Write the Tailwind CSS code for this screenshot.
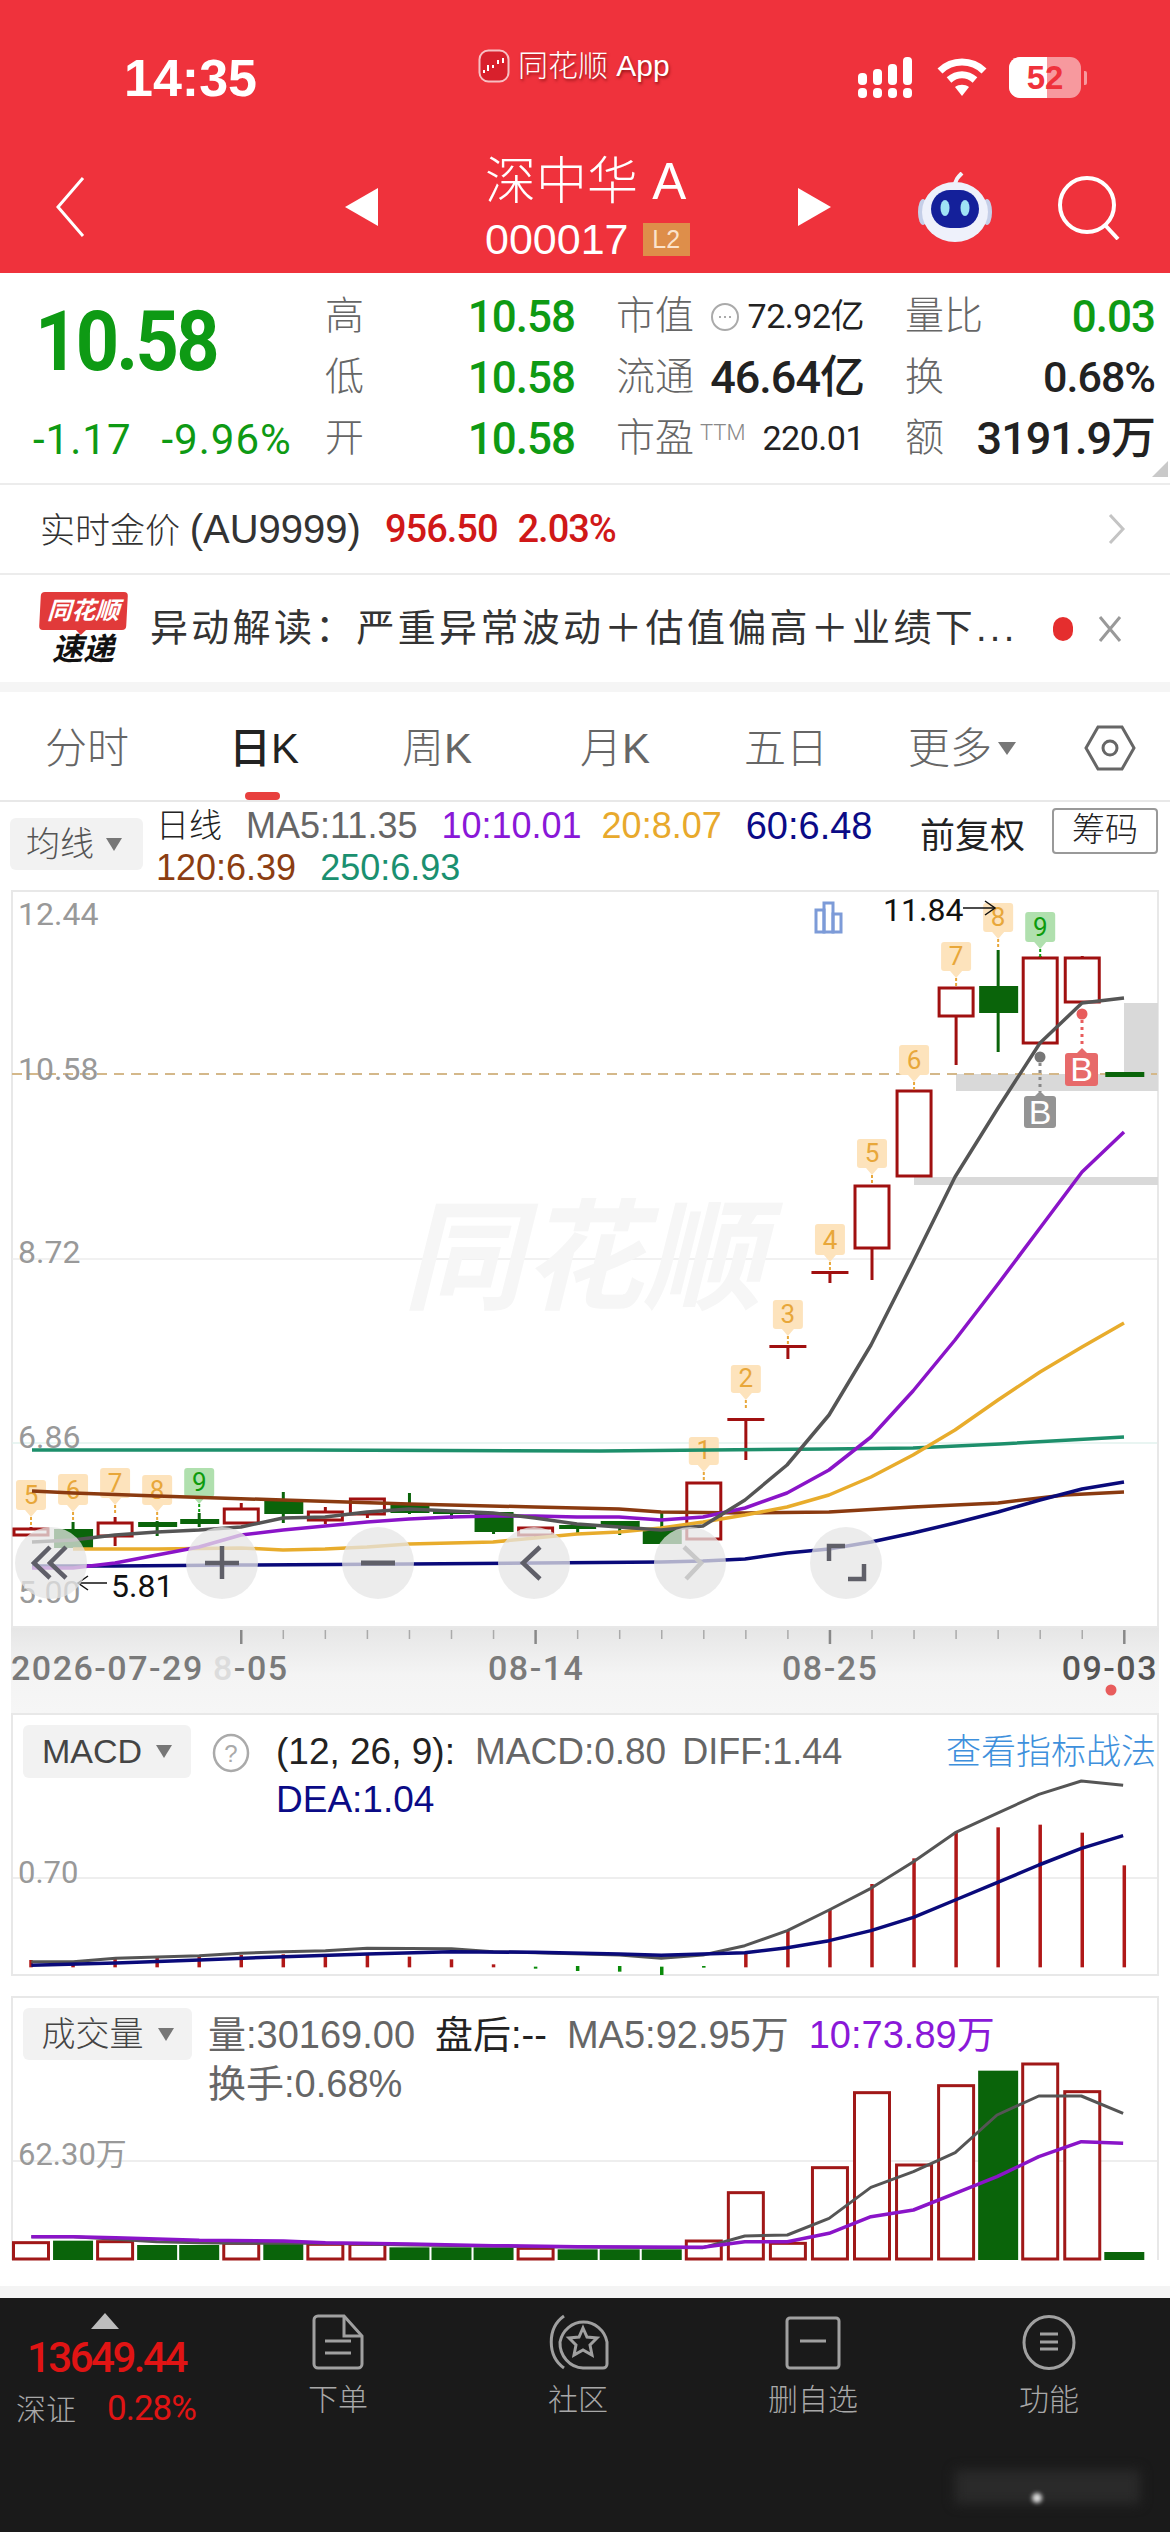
<!DOCTYPE html>
<html lang="zh-CN">
<head>
    <meta charset="UTF-8">
    <meta name="viewport" content="width=device-width, initial-scale=1.0">
    <title>深中华A</title>
    <script src="https://cdn.jsdelivr.net/npm/@tailwindcss/browser@4"></script>
</head>
<body class="bg-white">
<div class="w-[1170px] h-[2532px] overflow-hidden flex flex-col bg-white text-[#333] font-['Liberation_Sans','Noto_Sans_CJK_SC',sans-serif]">

    <!-- header -->
    <header class="h-[273px] flex-none bg-[#ef323c] text-white flex flex-col">
        <div class="h-[140px] flex-none flex pt-[48px]">
            <div class="w-[478px] pl-[124px] text-[52px] leading-[60px] font-bold">14:35</div>
            <div class="w-[379px] flex items-start gap-[8px] pt-[1px]">
                <svg width="32" height="34" viewBox="0 0 32 34"><rect x="1.5" y="1.5" width="29" height="31" rx="9" fill="#d8202c" stroke="#fff" stroke-opacity=".7" stroke-width="2"/><path d="M6 24v-3M10 22v-6M15 19v-3M20 15v-4M25 14V9" stroke="#fff" stroke-width="2"/></svg>
                <span class="text-[30px] leading-[34px] font-light [text-shadow:1px_2px_3px_rgba(90,0,0,.6)]">同花顺 App</span>
            </div>
            <div class="flex items-start gap-[22px] pt-[9px]">
                <svg width="58" height="42" viewBox="0 0 58 42" fill="#fff">
                    <rect x="1" y="16" width="9" height="12" rx="4"/><rect x="1" y="31" width="9" height="10" rx="4"/>
                    <rect x="16" y="12" width="9" height="16" rx="4"/><rect x="16" y="31" width="9" height="10" rx="4"/>
                    <rect x="31" y="7" width="9" height="21" rx="4"/><rect x="31" y="31" width="9" height="10" rx="4"/>
                    <rect x="46" y="0" width="9" height="28" rx="4"/><rect x="46" y="31" width="9" height="10" rx="4"/>
                </svg>
                <svg width="50" height="40" viewBox="0 0 50 40" fill="none" stroke="#fff" stroke-width="7">
                    <path d="M3 14C15 2 35 2 47 14"/><path d="M12 23c8-7 18-7 26 0"/><path d="M25 39l-7-9c4-3 10-3 14 0z" fill="#fff" stroke="none"/>
                </svg>
                <div class="flex items-center">
                    <div class="relative w-[72px] h-[41px] rounded-[11px] bg-white/50 overflow-hidden">
                        <div class="absolute left-0 top-0 bottom-0 w-[38px] bg-white"></div>
                        <div class="absolute inset-0 text-center text-[#ef323c] text-[33px] leading-[41px] font-bold">52</div>
                    </div>
                    <div class="ml-[3px] w-[3px] h-[14px] rounded-r-[2px] bg-white/50"></div>
                </div>
            </div>
        </div>
        <div class="flex-1 flex items-center">
            <svg class="ml-[55px]" width="30" height="60" viewBox="0 0 30 60" fill="none" stroke="#fff" stroke-width="3"><path d="M28 1L3 30l25 29"/></svg>
            <svg class="ml-[260px]" width="33" height="38" viewBox="0 0 33 38" fill="#fff"><path d="M33 0v38L0 19z"/></svg>
            <div class="ml-[107px] w-[205px] flex flex-col">
                <div class="text-[51px] leading-[62px] font-light whitespace-nowrap">深中华 A</div>
                <div class="flex items-center mt-[3px]">
                    <span class="text-[43px] leading-[46px] font-light">000017</span>
                    <span class="ml-[14px] w-[48px] h-[33px] bg-[#de8e4a] text-[#fbe3cc] text-[25px] leading-[33px] text-center">L2</span>
                </div>
            </div>
            <svg class="ml-[108px]" width="33" height="38" viewBox="0 0 33 38" fill="#fff"><path d="M0 0v38l33-19z"/></svg>
            <svg class="ml-[87px]" width="74" height="70" viewBox="0 0 74 70">
                <path d="M37 14C37 8 40 5 44 1" stroke="#f2f4fb" stroke-width="4" fill="none"/>
                <ellipse cx="5" cy="40" rx="5" ry="13" fill="#c5cfe8"/><ellipse cx="69" cy="40" rx="5" ry="13" fill="#c5cfe8"/>
                <ellipse cx="37" cy="40" rx="33" ry="30" fill="#eef1fb"/>
                <rect x="13" y="18" width="48" height="38" rx="19" fill="#14209a"/>
                <ellipse cx="27" cy="36" rx="4.5" ry="8" fill="#9fe3f5"/><ellipse cx="47" cy="36" rx="4.5" ry="8" fill="#9fe3f5"/>
            </svg>
            <svg class="ml-[66px] mt-[2px]" width="62" height="64" viewBox="0 0 62 64" fill="none" stroke="#fff" stroke-width="4"><circle cx="29" cy="29" r="27"/><path d="M47 49l13 14"/></svg>
        </div>
    </header>

    <!-- quote -->
    <section class="relative h-[212px] flex-none border-b-2 border-[#ececec] flex">
        <div class="w-[325px] flex-none flex flex-col text-[#0e9a14]">
            <div class="ml-[35px] pt-[20px] origin-left scale-x-[.9] text-[84px] leading-[98px] font-bold font-['Roboto',sans-serif] tracking-[-3px]">10.58</div>
            <div class="pl-[33px] mt-[26px] flex gap-[30px] text-[42px] leading-[46px] tracking-[1px] font-['Roboto',sans-serif]"><span>-1.17</span><span>-9.96%</span></div>
        </div>
        <div class="pt-[13px] grid grid-cols-[250px_248px_250px] gap-x-[41px] auto-rows-[61px] text-[39px] font-light">
            <div class="flex justify-between items-center"><span class="text-[#666]">高</span><span class="text-[#0e9a14] text-[44px] font-medium font-['Roboto',sans-serif] tracking-[-1px]">10.58</span></div>
            <div class="flex justify-between items-center"><span class="text-[#666]">市值</span><span class="flex items-center"><svg class="mr-[8px]" width="30" height="30" viewBox="0 0 30 30" fill="none" stroke="#aaa" stroke-width="2"><circle cx="15" cy="15" r="13"/><path d="M9 15h2M14 15h2M19 15h2"/></svg><span class="text-[#222] text-[34px] font-['Roboto','Noto_Sans_CJK_SC',sans-serif] font-normal tracking-[-.5px]">72.92亿</span></span></div>
            <div class="flex justify-between items-center"><span class="text-[#666]">量比</span><span class="text-[#0e9a14] text-[44px] font-medium font-['Roboto',sans-serif] tracking-[-1px]">0.03</span></div>

            <div class="flex justify-between items-center"><span class="text-[#666]">低</span><span class="text-[#0e9a14] text-[44px] font-medium font-['Roboto',sans-serif] tracking-[-1px]">10.58</span></div>
            <div class="flex justify-between items-center"><span class="text-[#666]">流通</span><span class="text-[#222] text-[45px] font-medium font-['Roboto','Noto_Sans_CJK_SC',sans-serif] tracking-[-1px]">46.64亿</span></div>
            <div class="flex justify-between items-center"><span class="text-[#666]">换</span><span class="text-[#222] text-[43px] font-medium font-['Roboto',sans-serif] tracking-[-1px]">0.68%</span></div>

            <div class="flex justify-between items-center"><span class="text-[#666]">开</span><span class="text-[#0e9a14] text-[44px] font-medium font-['Roboto',sans-serif] tracking-[-1px]">10.58</span></div>
            <div class="flex justify-between items-center"><span class="text-[#666]">市盈<sup class="text-[22px] ml-[6px] text-[#888] font-['Roboto',sans-serif]">TTM</sup></span><span class="text-[#222] text-[34px] font-normal font-['Roboto',sans-serif] tracking-[-.5px]">220.01</span></div>
            <div class="flex justify-between items-center"><span class="text-[#666]">额</span><span class="text-[#222] text-[45px] font-medium font-['Roboto','Noto_Sans_CJK_SC',sans-serif] tracking-[-1px]">3191.9万</span></div>
        </div>
        <div class="absolute right-[2px] bottom-[6px] w-0 h-0 border-l-[16px] border-l-transparent border-b-[16px] border-b-[#c9c9c9]"></div>
    </section>

    <!-- gold price row -->
    <section class="h-[90px] flex-none border-b-2 border-[#ececec] flex items-center pl-[40px] text-[35px] whitespace-nowrap">
        <span class="font-light">实时金价 <span class="text-[40px]">(AU9999)</span></span>
        <span class="ml-[24px] text-[#d01818] font-medium text-[38px] font-['Roboto',sans-serif] tracking-[-1px]">956.50</span>
        <span class="ml-[20px] text-[#d01818] font-medium text-[38px] font-['Roboto',sans-serif] tracking-[-1px]">2.03%</span>
        <svg class="ml-auto mr-[44px]" width="18" height="32" viewBox="0 0 18 32" fill="none" stroke="#c4c4c4" stroke-width="3"><path d="M2 2l13 14L2 30"/></svg>
    </section>

    <!-- news row -->
    <section class="h-[107px] flex-none flex items-center pl-[38px] whitespace-nowrap">
        <div class="w-[90px] flex-none flex flex-col items-center">
            <div class="relative w-[87px] h-[38px] bg-[#e13a3a] rounded-[4px] -skew-x-3 text-white text-[24px] leading-[38px] font-bold italic text-center">同花顺
                <div class="absolute left-[36px] top-[37px] w-0 h-0 border-x-[6px] border-x-transparent border-t-[6px] border-t-[#e13a3a]"></div>
            </div>
            <div class="mt-[4px] text-[#111] text-[31px] leading-[32px] font-bold italic">速递</div>
        </div>
        <div class="ml-[22px] text-[38px] tracking-[3.3px] w-[870px] font-normal">异动解读：严重异常波动＋估值偏高＋业绩下...</div>
        <div class="ml-[33px] w-[20px] h-[24px] rounded-full bg-[#e52e2e] flex-none"></div>
        <svg class="ml-[25px]" width="24" height="28" viewBox="0 0 24 28" stroke="#999" stroke-width="3"><path d="M2 2l20 24M22 2L2 26"/></svg>
    </section>
    <div class="h-[10px] flex-none bg-[#f5f5f5]"></div>

    <!-- period tabs -->
    <nav class="relative h-[110px] flex-none border-b-2 border-[#e8e8e8] flex items-center text-[42px] text-[#666] font-light pt-[4px]">
        <div class="w-[174px] text-center">分时</div>
        <div class="w-[180px] text-center text-[#222] font-medium">日K</div>
        <div class="w-[166px] text-center">周K</div>
        <div class="w-[190px] text-center">月K</div>
        <div class="w-[152px] text-center">五日</div>
        <div class="w-[200px] text-center flex items-center justify-center">更多<span class="ml-[6px] w-0 h-0 border-x-[9px] border-x-transparent border-t-[13px] border-t-[#777]"></span></div>
        <svg class="ml-[22px]" width="52" height="46" viewBox="0 0 52 46" fill="none" stroke="#666" stroke-width="3"><path d="M14 2h24l12 21-12 21H14L2 23z"/><circle cx="26" cy="23" r="7"/></svg>
        <div class="absolute left-[245px] top-[100px] w-[35px] h-[8px] rounded-[4px] bg-[#e8403e]"></div>
    </nav>

    <!-- moving average legend -->
    <section class="h-[88px] flex-none relative">
        <div class="absolute left-[10px] top-[16px] w-[133px] h-[52px] rounded-[6px] bg-[#f2f2f2] flex items-center pl-[16px] text-[34px] text-[#555] font-light">均线<span class="ml-[12px] w-0 h-0 border-x-[8px] border-x-transparent border-t-[13px] border-t-[#777]"></span></div>
        <div class="pl-[156px] pt-[3px] text-[36px] leading-[42px] whitespace-nowrap">
            <div class="flex gap-[24px]">
                <span class="text-[#222] font-light text-[33px]">日线</span>
                <span class="text-[#666]">MA5:11.35</span>
                <span class="text-[#8a18d8] -mr-[4px]">10:10.01</span>
                <span class="text-[#e8a92c]">20:8.07</span>
                <span class="text-[#0b0b86] text-[38px]">60:6.48</span>
            </div>
            <div class="flex gap-[24px]">
                <span class="text-[#8b3d12]">120:6.39</span>
                <span class="text-[#1a9070]">250:6.93</span>
            </div>
        </div>
        <div class="absolute left-[920px] top-[10px] leading-[48px] text-[35px] font-normal text-[#222]">前复权</div>
        <div class="absolute left-[1052px] top-[6px] w-[106px] h-[46px] border-2 border-[#999] rounded-[4px] text-center text-[33px] leading-[40px] text-[#222] font-light">筹码</div>
    </section>

    <!-- k line chart, one canvas with its date axis -->
    <svg id="kline" class="flex-none block" width="1170" height="823" viewBox="0 890 1170 823"></svg>

    <!-- MACD panel -->
    <section class="relative mx-[11px] h-[263px] flex-none border-2 border-[#e8e8e8]">
        <svg id="macd" class="absolute left-[-13px] top-[-2px]" width="1170" height="263" viewBox="0 1713 1170 263"></svg>
        <div class="relative flex pl-[10px] pt-[10px]">
            <div class="w-[168px] h-[53px] rounded-[6px] bg-[#f2f2f2] flex items-center justify-center text-[34px] text-[#444]">MACD<span class="ml-[14px] w-0 h-0 border-x-[8px] border-x-transparent border-t-[13px] border-t-[#777]"></span></div>
            <svg class="ml-[21px] mt-[8px]" width="38" height="40" viewBox="0 0 38 40" fill="none" stroke="#aaa" stroke-width="2.5"><ellipse cx="19" cy="20" rx="17" ry="18"/><text x="19" y="29" text-anchor="middle" font-size="24" fill="#aaa" stroke="none">?</text></svg>
            <div class="ml-[26px] flex-1 pt-[3px] text-[37px] leading-[48px] whitespace-nowrap">
                <div class="flex">
                    <span class="text-[#222]">(12, 26, 9):</span>
                    <span class="ml-[20px] text-[#666]">MACD:0.80</span>
                    <span class="ml-[16px] text-[#666] text-[36px]">DIFF:1.44</span>
                    <span class="ml-auto mr-[1px] text-[#3e90dc] text-[35px] font-light">查看指标战法</span>
                </div>
                <div class="text-[#0b0b86]">DEA:1.04</div>
            </div>
        </div>
    </section>

    <div class="h-[20px] flex-none"></div>

    <!-- volume panel -->
    <section class="relative mx-[11px] h-[264px] flex-none border-x-2 border-t-2 border-[#e8e8e8]">
        <svg id="vol" class="absolute left-[-13px] top-[-2px]" width="1170" height="266" viewBox="0 1996 1170 266"></svg>
        <div class="relative flex pl-[10px] pt-[10px]">
            <div class="w-[169px] h-[52px] rounded-[6px] bg-[#f2f2f2] flex items-center justify-center text-[34px] text-[#444] font-light">成交量<span class="ml-[14px] w-0 h-0 border-x-[8px] border-x-transparent border-t-[13px] border-t-[#777]"></span></div>
            <div class="ml-[16px] text-[38px] leading-[49px] pt-[3px] whitespace-nowrap">
                <div class="flex gap-[20px]">
                    <span class="text-[#666]">量:30169.00</span>
                    <span class="text-[#222]">盘后:--</span>
                    <span class="text-[#666]">MA5:92.95万</span>
                    <span class="text-[#8a18d8]">10:73.89万</span>
                </div>
                <div class="text-[#666]">换手:0.68%</div>
            </div>
        </div>
    </section>

    <div class="h-[26px] flex-none"></div>
    <div class="h-[12px] flex-none bg-[#f4f4f4]"></div>

    <!-- bottom bar -->
    <footer class="relative flex-1 bg-[#1a1a1a] flex items-start text-[#a8a8a8] text-[30px] font-light">
        <div class="w-[218px] flex-none pt-[15px] flex flex-col">
            <div class="ml-[91px] w-0 h-0 border-x-[14px] border-x-transparent border-b-[16px] border-b-[#bdbdbd]"></div>
            <div class="pl-[27px] mt-[6px] text-[#e01414] text-[42px] leading-[46px] font-medium font-['Roboto',sans-serif] tracking-[-2.5px]">13649.44</div>
            <div class="pl-[16px] mt-[2px] flex items-center gap-[31px]"><span>深证</span><span class="text-[#e01414] text-[35px] font-normal font-['Roboto',sans-serif] tracking-[-1px]">0.28%</span></div>
        </div>
        <div class="w-[240px] flex-none pt-[16px] flex flex-col items-center">
            <svg width="52" height="56" viewBox="0 0 52 56" fill="none" stroke="#a0a0a0" stroke-width="3"><path d="M6 2h26l18 20v28a4 4 0 0 1-4 4H6a4 4 0 0 1-4-4V6a4 4 0 0 1 4-4z"/><path d="M32 2v20h18M13 27h26M13 39h26"/></svg>
            <div class="mt-[12px] leading-[36px]">下单</div>
        </div>
        <div class="w-[240px] flex-none pt-[16px] flex flex-col items-center">
            <svg width="62" height="56" viewBox="0 0 62 56" fill="none" stroke="#a0a0a0" stroke-width="3"><path d="M17 2C0 14 0 42 17 54"/><path d="M13 28a24 25 0 0 1 47 0v22a4 4 0 0 1-4 4H36a24 25 0 0 1-23-26z"/><path d="M36 14l4 9 10 1-7 7 2 10-9-5-9 5 2-10-7-7 10-1z"/></svg>
            <div class="mt-[12px] leading-[36px]">社区</div>
        </div>
        <div class="w-[230px] flex-none pt-[18px] flex flex-col items-center">
            <svg width="56" height="54" viewBox="0 0 56 54" fill="none" stroke="#a0a0a0" stroke-width="3"><rect x="2" y="2" width="52" height="50" rx="3"/><path d="M15 25h26"/></svg>
            <div class="mt-[12px] leading-[36px]">删自选</div>
        </div>
        <div class="w-[242px] flex-none pt-[17px] flex flex-col items-center">
            <svg width="54" height="55" viewBox="0 0 54 55" fill="none" stroke="#a0a0a0" stroke-width="3"><ellipse cx="27" cy="27.5" rx="25" ry="26"/><path d="M18 19h18M18 27h18M18 34h18"/></svg>
            <div class="mt-[12px] leading-[36px]">功能</div>
        </div>
        <div class="absolute left-[955px] top-[172px] w-[185px] h-[34px] bg-[#2a2a2a] blur-[6px]"></div>
        <div class="absolute left-[1032px] top-[195px] w-[10px] h-[10px] rounded-full bg-[#ddd] blur-[2px]"></div>
    </footer>
</div>

<script>
    const RED = "#a01010", GREEN = "#0a640a";
    const GRAY = "#555", PURPLE = "#8a14c8", ORANGE = "#e8ac2c", NAVY = "#0a0a7a", BROWN = "#8a3a10", TEAL = "#1d8f6b";
    const STEP = 42.05, FIRST = 31;
    const xAt = i => FIRST + STEP * i;

    function line(x1, y1, x2, y2, c, w, extra) {
        return `<line x1="${x1}" y1="${y1}" x2="${x2}" y2="${y2}" stroke="${c}" stroke-width="${w}" ${extra || ""}/>`;
    }
    function rect(x, y, w, h, fill, extra) {
        return `<rect x="${x}" y="${y}" width="${w}" height="${h}" fill="${fill}" ${extra || ""}/>`;
    }
    function text(x, y, s, size, fill, extra) {
        return `<text x="${x}" y="${y}" font-size="${size}" fill="${fill}" ${extra || ""}>${s}</text>`;
    }
    function poly(pts, c, w) {
        const p = pts.map(a => a.join(",")).join(" ");
        return `<polyline points="${p}" fill="none" stroke="${c}" stroke-width="${w}" stroke-linejoin="round" stroke-linecap="butt"/>`;
    }
    const ROBOTO = `font-family="Roboto, sans-serif"`;
    const LIB = `font-family="Liberation Sans, sans-serif"`;

    // ----- k line -----
    // [up?, bodyTop, bodyBottom, wickTop, wickBottom]
    const candles = [
        [1,1529,1535,1527,1536],[0,1529,1548,1522,1548],[1,1523,1536,1517,1546],[0,1522,1527,1521,1536],
        [0,1519,1524,1513,1527],[1,1509,1523,1503,1524],[0,1501,1514,1492,1523],[1,1512,1520,1507,1524],
        [1,1499,1514,1498,1518],[0,1504,1513,1493,1514],[0,1510,1514,1510,1519],[0,1512,1532,1512,1534],
        [1,1528,1535,1528,1537],[0,1525,1529,1525,1534],[0,1521,1527,1521,1535],[0,1530,1544,1513,1544],
        [1,1483,1539,1483,1539],[1,1418,1421,1418,1460],[1,1345,1348,1345,1359],[1,1271,1274,1271,1283],
        [1,1186,1248,1186,1280],[1,1091,1176,1091,1176],[1,988,1016,988,1065],[0,986,1013,950,1052],
        [1,958,1043,956,1043],[1,958,1002,956,1002],[0,1072,1077,1072,1077]
    ];
    // tag number, candle index, top, bottom, green
    const tags = [
        ["5",0,1480,1510],["6",1,1474,1505],["7",2,1468,1498],["8",3,1475,1505],["9",4,1468,1497,1],
        ["1",16,1437,1465],["2",17,1365,1393],["3",18,1300,1329],["4",19,1224,1255],["5",20,1139,1168],
        ["6",21,1045,1075],["7",22,942,971],["8",23,903,932],["9",24,912,942,1]
    ];
    const ma5 = [[32,1542],[73,1540],[115,1535],[157,1532],[199,1530],[241,1527],[283,1518],[325,1517],[367,1512],[409,1509],[451,1511],[493,1513],[535,1518],[577,1524],[619,1527],[661,1530],[703,1526],[745,1500],[787,1465],[829,1415],[871,1345],[913,1262],[955,1177],[998,1108],[1040,1043],[1082,1003],[1124,998]];
    const ma10 = [[32,1568],[73,1568],[115,1563],[157,1555],[199,1547],[241,1535],[283,1530],[325,1526],[367,1522],[409,1519],[451,1517],[493,1516],[535,1516],[577,1517],[619,1517],[661,1520],[703,1517],[745,1508],[787,1493],[829,1470],[871,1437],[913,1391],[955,1340],[998,1284],[1040,1228],[1082,1172],[1124,1132]];
    const ma20 = [[73,1549],[115,1549],[157,1549],[241,1548],[283,1550],[325,1549],[367,1547],[409,1544],[451,1543],[493,1542],[535,1538],[577,1534],[619,1532],[661,1528],[703,1522],[745,1515],[787,1507],[829,1495],[871,1477],[913,1455],[955,1430],[998,1400],[1040,1372],[1082,1347],[1124,1323]];
    const ma60 = [[32,1566],[115,1566],[241,1565],[409,1564],[535,1563],[661,1562],[703,1561],[745,1559],[787,1553],[829,1549],[871,1542],[913,1533],[955,1523],[998,1512],[1040,1500],[1082,1489],[1124,1482]];
    const ma120 = [[32,1491],[73,1493],[157,1496],[283,1500],[409,1504],[535,1507],[619,1509],[661,1512],[745,1513],[829,1512],[913,1507],[998,1503],[1065,1495],[1124,1492]];
    const ma250 = [[32,1450],[300,1450],[600,1451],[829,1449],[913,1448],[1000,1444],[1124,1437]];

    let k = "";
    k += rect(12, 891, 1146, 736, "#fff", `stroke="#e8e8e8" stroke-width="2"`);
    k += line(12, 1259, 1157, 1259, "#ececec", 1.5);
    k += line(12, 1443, 1157, 1443, "#e2f2ee", 1.5);
    k += text(403, 1300, "同花顺", 120, "#f6f6f6", `font-family="Noto Sans CJK SC, sans-serif" font-weight="700" font-style="italic"`);
    k += rect(956, 1074, 202, 17, "#d9d9d9");
    k += rect(914, 1177, 244, 8, "#d9d9d9");
    k += rect(1124, 1003, 34, 71, "#d9d9d9");
    k += line(12, 1074, 1157, 1074, "#d4b88a", 2, `stroke-dasharray="10 7"`);
    k += `<g ${ROBOTO}>` + text(18, 925, "12.44", 32, "#999") + text(18, 1080, "10.58", 32, "#999") + text(18, 1263, "8.72", 32, "#999") + text(18, 1448, "6.86", 32, "#999") + text(18, 1603, "5.00", 32, "#999") + `</g>`;

    candles.forEach((c, i) => {
        const x = xAt(i), col = c[0] ? RED : GREEN, h = c[2] - c[1];
        k += line(x, c[3], x, c[4], col, 3);
        if (h <= 4) k += rect(x - 18.5, c[1], 37, h, col);
        else if (c[0]) k += rect(x - 17, c[1], 34, h, "#fff", `stroke="${col}" stroke-width="3"`);
        else k += rect(x - 19, c[1], 39, h, col);
    });

    tags.forEach(t => {
        const x = xAt(t[1]), g = t[4], bg = g ? "#b0e0ae" : "#fde3bc", fg = g ? "#0d9b0d" : "#e8a73a";
        k += rect(x - 15, t[2], 30, t[3] - t[2], bg, `rx="3"`);
        k += `<path d="M${x - 6} ${t[3]}L${x} ${t[3] + 7}L${x + 6} ${t[3]}z" fill="${bg}"/>`;
        k += line(x, t[3] + 7, x, t[3] + 16, fg, 2, `stroke-dasharray="3 2"`);
        k += text(x, t[3] - 6, t[0], 26, fg, `text-anchor="middle" ${ROBOTO}`);
    });

    k += poly(ma250, TEAL, 3.5) + poly(ma120, BROWN, 3.5) + poly(ma60, NAVY, 3.5) + poly(ma20, ORANGE, 3.5) + poly(ma10, PURPLE, 3.5) + poly(ma5, GRAY, 3.5);

    // top and bottom price notes
    k += text(883, 921, "11.84", 32, "#111", ROBOTO) + line(963, 908, 994, 908, "#111", 1.5) + `<path d="M985 901l10 7-10 7" fill="none" stroke="#111" stroke-width="1.5"/>`;
    k += text(111, 1597, "5.81", 32, "#111", ROBOTO) + line(79, 1583, 107, 1583, "#111", 1.5) + `<path d="M88 1576l-10 7 10 7" fill="none" stroke="#111" stroke-width="1.5"/>`;
    k += rect(816, 910, 8, 22, "none", `stroke="#7d9bd8" stroke-width="3"`) + rect(824, 903, 9, 29, "none", `stroke="#7d9bd8" stroke-width="3"`) + rect(833, 914, 8, 18, "none", `stroke="#7d9bd8" stroke-width="3"`);

    // buy markers
    k += `<circle cx="1082" cy="1014" r="5.5" fill="#e85c5c"/>` + line(1082, 1020, 1082, 1048, "#e85c5c", 3, `stroke-dasharray="3 4"`);
    k += `<path d="M1076 1054l6-6 6 6z" fill="#e76a6a"/>` + rect(1065, 1053, 33, 33, "#e76a6a", `rx="3"`) + text(1081.5, 1081, "B", 34, "#fff", `text-anchor="middle" ${LIB}`);
    k += `<circle cx="1040" cy="1057" r="5.5" fill="#777"/>` + line(1040, 1063, 1040, 1092, "#888", 3, `stroke-dasharray="3 4"`);
    k += `<path d="M1034 1097l6-6 6 6z" fill="#949494"/>` + rect(1024, 1096, 32, 32, "#949494", `rx="3"`) + text(1040, 1124, "B", 34, "#fff", `text-anchor="middle" ${LIB}`);

    // axis strip
    k += `<defs><linearGradient id="axisBg" x1="0" y1="0" x2="0" y2="1"><stop offset="0" stop-color="#e6e6e6"/><stop offset=".55" stop-color="#f4f4f4"/><stop offset="1" stop-color="#f6f6f6"/></linearGradient></defs>`;
    k += rect(11, 1628, 1148, 85, "url(#axisBg)");
    for (let i = 5; i <= 26; i++) {
        const big = (i - 5) % 7 === 0;
        k += line(xAt(i), 1630, xAt(i), big ? 1644 : 1639, big ? "#888" : "#aaa", big ? 2.5 : 1.5);
    }
    const sp = `letter-spacing="1.5" font-weight="500" ${ROBOTO}`;
    k += text(11, 1680, "2026-07-29", 34, "#7a7a7a", sp);
    k += text(213, 1680, `<tspan fill="#dcdcdc">8</tspan>-05`, 34, "#7a7a7a", sp);
    k += text(488, 1680, "08-14", 34, "#7a7a7a", sp);
    k += text(782, 1680, "08-25", 34, "#7a7a7a", sp);
    k += text(1158, 1680, "09-03", 34, "#555", `text-anchor="end" ${sp}`);
    k += `<circle cx="1111" cy="1690" r="5.5" fill="#e85c5c"/>`;

    // round buttons over the chart
    [51, 222, 378, 534, 690, 846].forEach(x => {
        k += `<ellipse cx="${x}" cy="1563" rx="36" ry="36" fill="#e6e6e6" fill-opacity=".75"/>`;
    });
    const ic = `fill="none" stroke="#5f5f68" stroke-width="4.5"`;
    k += `<path d="M50 1547L34 1563L50 1578M66 1547L50 1563L66 1578" ${ic}/>`;
    k += `<path d="M205 1563H239M222 1546V1579" ${ic}/>`;
    k += `<path d="M361 1563H395" fill="none" stroke="#5f5f68" stroke-width="5"/>`;
    k += `<path d="M540 1547L523 1563L540 1579" ${ic}/>`;
    k += `<path d="M684 1547L701 1563L686 1579" fill="none" stroke="#c8c8c8" stroke-width="4.5"/>`;
    k += `<path d="M829 1561V1546H845M864 1564V1579H848" ${ic}/>`;
    document.getElementById("kline").innerHTML = k;

    // ----- MACD, values are read off the picture in px above the panel -----
    const mY = v => 1680 + v / 3;
    const mTops = [840,845,835,830,830,825,823,828,825,830,838,853,860,858,858,860,858,818,752,688,612,535,458,442,434,458,556];
    const mBots = [862,862,862,862,862,862,862,862,862,862,862,862,866,873,875,885,863,862,862,862,862,862,862,862,862,862,862];
    const diff = [[42,845],[98,845],[155,835],[267,827],[323,820],[380,815],[436,812],[492,805],[605,806],[661,815],[830,825],[886,835],[942,825],[998,797],[1055,752],[1111,690],[1167,625],[1224,545],[1280,458],[1336,400],[1392,343],[1449,303],[1505,316]];
    const dea = [[42,856],[155,849],[267,840],[380,830],[492,822],[605,815],[717,817],[830,822],[886,826],[998,818],[1055,803],[1111,782],[1167,752],[1224,712],[1280,660],[1336,608],[1392,555],[1449,505],[1505,467]];
    let m = "";
    m += line(12, 1878, 1157, 1878, "#e8e8e8", 1.5);
    m += text(18, 1883, "0.70", 31, "#999", ROBOTO);
    mTops.forEach((t, i) => {
        const col = i >= 12 && i <= 16 ? "#0a8a0a" : "#b01818";
        m += line(xAt(i), mY(t), xAt(i), mY(mBots[i]), col, 3.5);
    });
    const conv = a => a.map(p => [p[0] / 1.34, mY(p[1])]);
    m += poly(conv(diff), GRAY, 3) + poly(conv(dea), NAVY, 3.5);
    document.getElementById("macd").innerHTML = m;

    // ----- volume -----
    const vY = v => 1980 + v / 3;
    const vTops = [788,782,785,795,795,790,790,793,793,802,802,802,805,808,808,808,783,638,790,563,338,555,317,272,252,335,816];
    const vUp   = [1,0,1,0,0,1,0,1,1,0,0,0,1,0,0,0,1,1,1,1,1,1,1,0,1,1,0];
    const vMa5 = [[42,770],[98,770],[155,778],[210,785],[267,788],[323,790],[380,790],[436,790],[549,795],[661,798],[717,800],[830,802],[942,803],[998,768],[1055,765],[1111,715],[1167,622],[1224,575],[1280,518],[1336,405],[1392,348],[1449,348],[1505,400]];
    const vMa10 = [[42,770],[98,770],[155,773],[267,781],[380,783],[436,788],[549,792],[661,797],[774,800],[942,802],[998,785],[1055,785],[1111,760],[1167,710],[1224,690],[1280,640],[1336,590],[1392,530],[1449,485],[1505,490]];
    let v = "";
    v += line(12, 2161, 1157, 2161, "#e8e8e8", 1.5);
    v += text(18, 2165, "62.30万", 31, "#999", `font-family="Roboto, Noto Sans CJK SC, sans-serif"`);
    vTops.forEach((t, i) => {
        const x = xAt(i), y = vY(t), h = 2259 - y;
        if (vUp[i]) v += rect(x - 17.5, y, 35, h, "#fff", `stroke="#a01818" stroke-width="3"`);
        else v += rect(x - 20, y, 40, h + 1, GREEN);
    });
    const conv2 = a => a.map(p => [p[0] / 1.34, vY(p[1])]);
    v += poly(conv2(vMa5), GRAY, 3) + poly(conv2(vMa10), PURPLE, 3.5);
    document.getElementById("vol").innerHTML = v;
</script>
</body>
</html>
